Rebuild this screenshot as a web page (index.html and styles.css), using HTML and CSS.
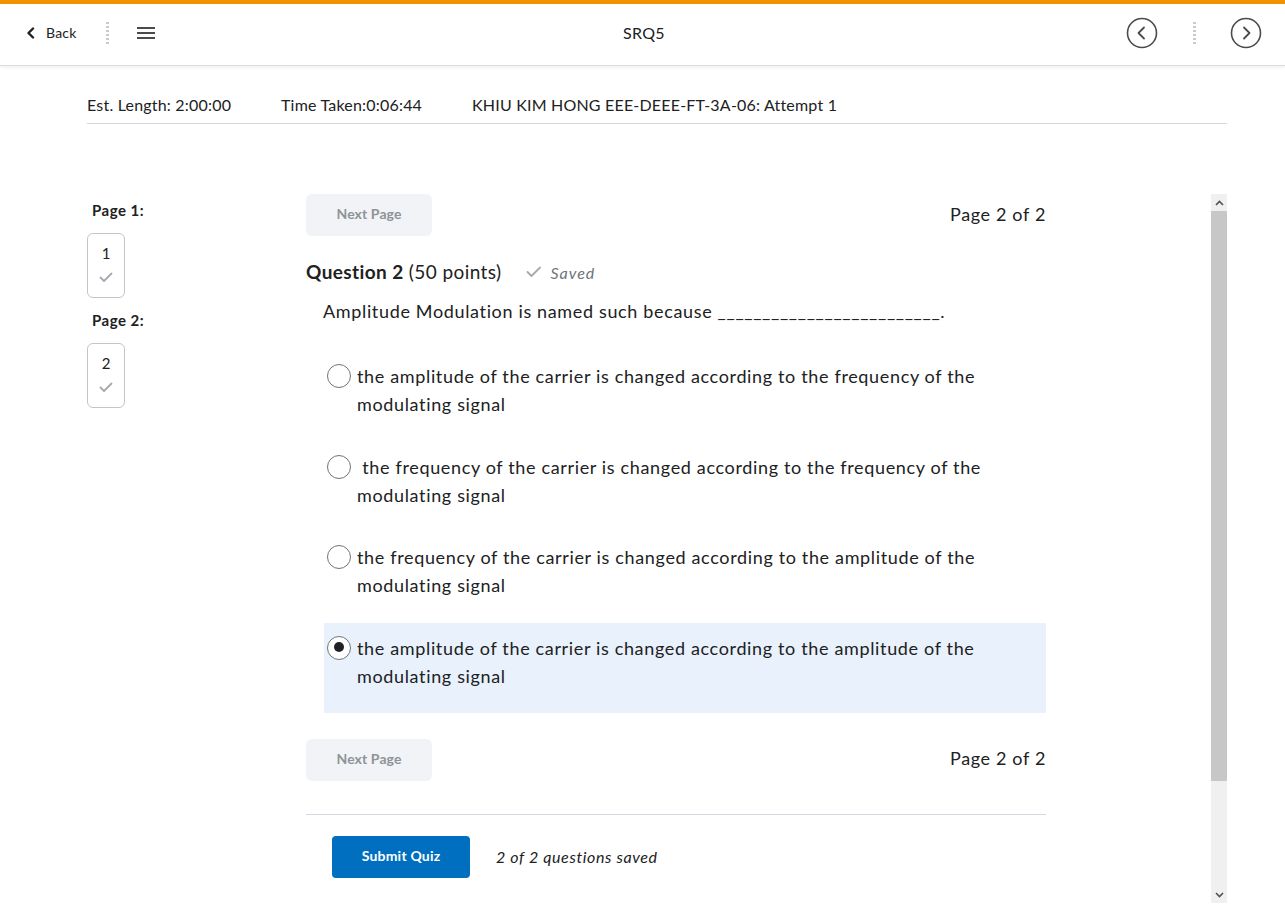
FILE: index.html
```html
<!DOCTYPE html>
<html lang="en">
<head>
<meta charset="utf-8">
<title>SRQ5</title>
<link rel="stylesheet" href="styles.css">
</head>
<body>
<header class="topbar">
  <div class="tb-left">
    <a class="back">
      <svg width="10" height="12" viewBox="0 0 10 12"><path d="M7 1.5 L2.5 6 L7 10.5" fill="none" stroke="#202122" stroke-width="2.4" stroke-linecap="round" stroke-linejoin="round"/></svg>
      <span>Back</span>
    </a>
    <span class="dots"></span>
    <svg class="menu" width="20" height="14" viewBox="0 0 20 14"><rect x="1" y="1" width="18" height="2" fill="#494c4e"/><rect x="1" y="6" width="18" height="2" fill="#494c4e"/><rect x="1" y="11" width="18" height="2" fill="#494c4e"/></svg>
  </div>
  <div class="tb-title">SRQ5</div>
  <div class="tb-right">
    <svg width="32" height="32" viewBox="0 0 32 32"><circle cx="16" cy="16" r="14.5" fill="none" stroke="#494c4e" stroke-width="1.6"/><path d="M18 10.5 L12.5 16 L18 21.5" fill="none" stroke="#494c4e" stroke-width="1.8" stroke-linecap="round" stroke-linejoin="round"/></svg>
    <span class="dots"></span>
    <svg width="32" height="32" viewBox="0 0 32 32"><circle cx="16" cy="16" r="14.5" fill="none" stroke="#494c4e" stroke-width="1.6"/><path d="M14 10.5 L19.5 16 L14 21.5" fill="none" stroke="#494c4e" stroke-width="1.8" stroke-linecap="round" stroke-linejoin="round"/></svg>
  </div>
</header>

<div class="info">
  <span>Est. Length: 2:00:00</span>
  <span>Time Taken:0:06:44</span>
  <span>KHIU KIM HONG EEE-DEEE-FT-3A-06: Attempt 1</span>
</div>

<div class="workspace">
  <nav class="pagenav">
    <div class="pn-label">Page 1:</div>
    <div class="pn-box"><span>1</span>
      <svg width="14" height="11" viewBox="0 0 14 11"><path d="M1.5 5.5 L5 9 L12.5 1.5" fill="none" stroke="#a4aaaf" stroke-width="1.8" stroke-linecap="round" stroke-linejoin="round"/></svg>
    </div>
    <div class="pn-label">Page 2:</div>
    <div class="pn-box"><span>2</span>
      <svg width="14" height="11" viewBox="0 0 14 11"><path d="M1.5 5.5 L5 9 L12.5 1.5" fill="none" stroke="#a4aaaf" stroke-width="1.8" stroke-linecap="round" stroke-linejoin="round"/></svg>
    </div>
  </nav>

  <main class="quiz">
    <div class="pager">
      <button class="btn-next">Next Page</button>
      <span class="pagecount">Page 2 of 2</span>
    </div>

    <div class="q-head">
      <h2><strong>Question 2</strong> (50 points)</h2>
      <span class="saved">
        <svg width="16" height="12" viewBox="0 0 16 12"><path d="M1.5 6 L5.5 10 L14 1.5" fill="none" stroke="#a4aaaf" stroke-width="1.8" stroke-linecap="round" stroke-linejoin="round"/></svg>
        <em>Saved</em>
      </span>
    </div>

    <p class="q-text">Amplitude Modulation is named such because _________________________.</p>

    <div class="options">
      <label class="opt"><span class="radio"></span><span class="opt-text">the amplitude of the carrier is changed according to the frequency of the modulating signal</span></label>
      <label class="opt"><span class="radio"></span><span class="opt-text">&nbsp;the frequency of the carrier is changed according to the frequency of the modulating signal</span></label>
      <label class="opt"><span class="radio"></span><span class="opt-text">the frequency of the carrier is changed according to the amplitude of the modulating signal</span></label>
      <label class="opt opt-selected"><span class="radio checked"></span><span class="opt-text">the amplitude of the carrier is changed according to the amplitude of the modulating signal</span></label>
    </div>

    <div class="pager pager-bottom">
      <button class="btn-next">Next Page</button>
      <span class="pagecount">Page 2 of 2</span>
    </div>

    <div class="submit-row">
      <button class="btn-submit">Submit Quiz</button>
      <em class="saved-count">2 of 2 questions saved</em>
    </div>
  </main>

  <div class="scrollbar">
    <div class="sb-btn sb-up"><svg width="9" height="6" viewBox="0 0 9 6"><path d="M1 5 L4.5 1.5 L8 5" fill="none" stroke="#505050" stroke-width="1.6"/></svg></div>
    <div class="sb-thumb"></div>
    <div class="sb-track"></div>
    <div class="sb-btn sb-down"><svg width="9" height="6" viewBox="0 0 9 6"><path d="M1 1 L4.5 4.5 L8 1" fill="none" stroke="#505050" stroke-width="1.6"/></svg></div>
  </div>
</div>
</body>
</html>
```

FILE: styles.css
```css
* { box-sizing: border-box; }
html, body { margin: 0; padding: 0; }
body {
  font-family: Lato, "Open Sans", "Liberation Sans", sans-serif;
  color: #202122;
  background: #fff;
  width: 1285px;
  height: 921px;
  overflow: hidden;
}

.topbar {
  height: 65px;
  border-top: 4px solid #f39200;
  box-shadow: 0 1px 0 #d9dcde, 0 2px 4px rgba(0,0,0,0.08);
  display: flex;
  align-items: center;
  justify-content: space-between;
  padding: 0 23px 3px 26px;
  position: relative;
}
.tb-left { display: flex; align-items: center; width: 300px; }
.back { display: flex; align-items: center; gap: 10px; font-size: 14px; color: #202122; letter-spacing: 0.2px; margin-bottom: 2px; }
.back svg { margin-top: 2px; }
.dots {
  display: inline-block;
  width: 3px;
  height: 24px;
  background-image: radial-gradient(circle, #c4cbd2 1.2px, transparent 1.4px);
  background-size: 3px 4px;
  margin: 0 27px 0 29px;
}
.tb-title { font-size: 16px; flex: 0 0 auto; text-align: center; letter-spacing: 0.3px; margin-bottom: 2px; }
.tb-right { display: flex; align-items: center; width: 300px; justify-content: flex-end; }
.tb-right .dots { margin: 0 34px 0 35px; }

.info {
  margin: 0 58px 0 87px;
  height: 59px;
  border-bottom: 1px solid #d3d9e3;
  display: flex;
  align-items: center;
  padding-top: 21px;
  font-size: 16px;
  letter-spacing: 0.2px;
}
.info span:nth-child(1) { width: 194px; }
.info span:nth-child(2) { width: 191px; }

.workspace {
  display: flex;
  margin: 70px 58px 0 87px;
  height: 709px;
}

.pagenav {
  width: 219px;
  flex: 0 0 219px;
  padding-top: 5px;
}
.pn-label {
  font-size: 15px;
  font-weight: 700;
  line-height: 22px;
  padding-left: 5px;
  letter-spacing: 0.5px;
}
.pn-box {
  width: 38px;
  height: 65px;
  border: 1px solid #c1c6cb;
  border-radius: 6px;
  margin: 12px 0 11px 0;
  display: flex;
  flex-direction: column;
  align-items: center;
  padding-top: 9px;
  font-size: 15px;
}
.pn-box span { line-height: 20px; }
.pn-box svg { margin-top: 9px; }

.quiz {
  width: 740px;
  flex: 0 0 740px;
}
.pager {
  display: flex;
  align-items: center;
  justify-content: space-between;
  height: 42px;
}
.btn-next {
  font-family: inherit;
  width: 126px;
  height: 42px;
  border: none;
  border-radius: 6px;
  background: #f1f3f7;
  color: #8e9397;
  font-size: 14px;
  font-weight: 700;
  padding: 0 0 3px 0;
  letter-spacing: 0.1px;
}
.pagecount { font-size: 18px; letter-spacing: 0.65px; margin-top: -3px; }

.q-head {
  display: flex;
  align-items: center;
  margin-top: 22px;
  height: 28px;
}
.q-head h2 {
  margin: 0;
  font-size: 19px;
  font-weight: 400;
  line-height: 28px;
  letter-spacing: 0.4px;
}
.q-head strong { font-weight: 700; }
.saved { display: flex; align-items: center; margin-left: 25px; gap: 8px; color: #6e7477; font-size: 16px; letter-spacing: 1px; }

.q-text {
  margin: 11px 0 0 17px;
  font-size: 18px;
  line-height: 28px;
  letter-spacing: 0.65px;
}

.options { margin-top: 26px; margin-left: 18px; }
.opt {
  display: flex;
  align-items: flex-start;
  padding: 11px 10px 23px 3px;
  margin-bottom: 0.67px;
  font-size: 18px;
  line-height: 28px;
  letter-spacing: 0.65px;
}
.opt-selected { background: #e8f1fc; }
.radio {
  flex: 0 0 24px;
  width: 24px;
  height: 24px;
  border: 1.5px solid #6e7477;
  border-radius: 50%;
  background: #fff;
  margin-top: 2px;
  margin-right: 6px;
  position: relative;
}
.radio.checked::after {
  content: "";
  position: absolute;
  left: 5.5px; top: 5.5px;
  width: 10px; height: 10px;
  border-radius: 50%;
  background: #202122;
}
.opt-text { flex: 1; }

.pager-bottom { margin-top: 26px; }

.submit-row {
  margin-top: 33px;
  border-top: 1px solid #d3d9e3;
  padding: 21px 0 0 26px;
  display: flex;
  align-items: center;
  gap: 26px;
}
.btn-submit {
  font-family: inherit;
  width: 138px;
  height: 42px;
  border: none;
  border-radius: 4px;
  background: #006fbf;
  color: #fff;
  font-size: 14px;
  font-weight: 700;
  padding: 0 0 3px 0;
  letter-spacing: 0.2px;
}
.saved-count { font-size: 16px; letter-spacing: 0.62px; }

.scrollbar {
  margin-left: auto;
  width: 16px;
  flex: 0 0 16px;
  display: flex;
  flex-direction: column;
  background: #f0f0f0;
}
.sb-btn { height: 17px; display: flex; align-items: center; justify-content: center; background: #f0f0f0; }
.sb-thumb { height: 570px; background: #c7c7c7; }
.sb-track { flex: 1; }
```
